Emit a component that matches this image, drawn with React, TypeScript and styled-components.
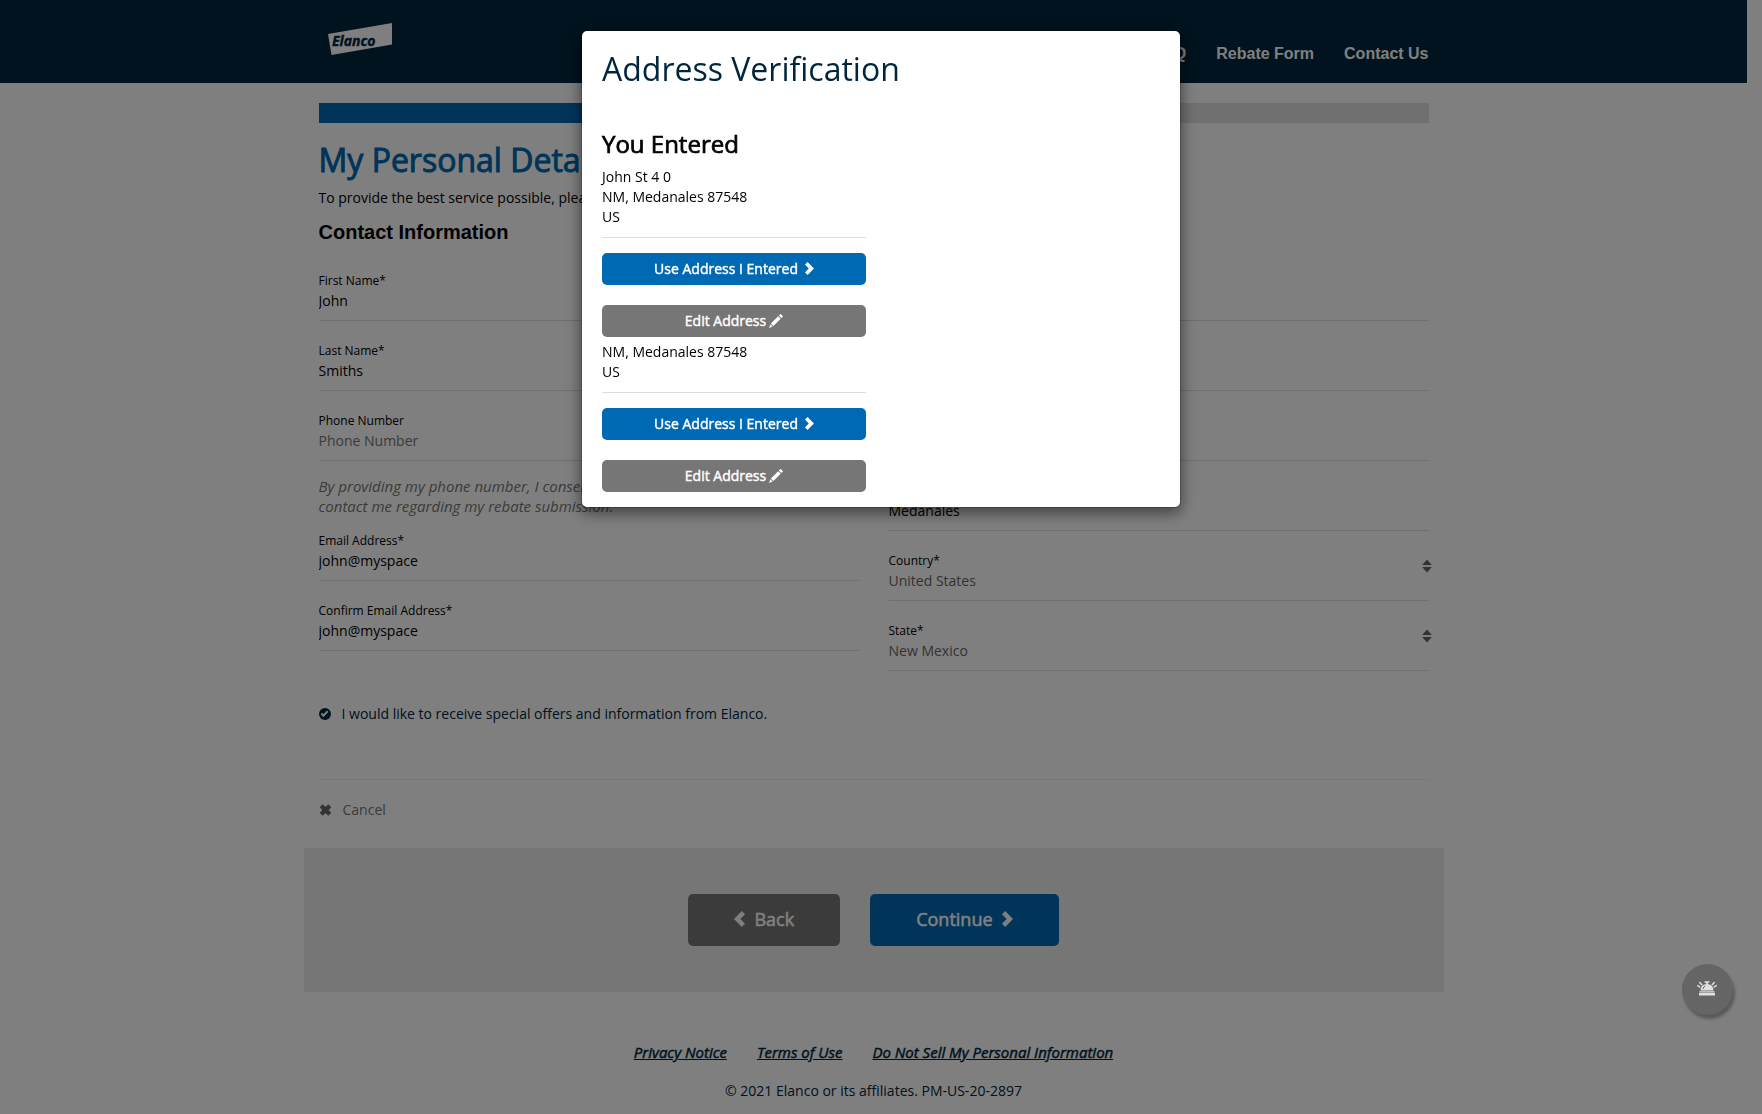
import React from 'react';
import styled, { createGlobalStyle, css } from 'styled-components';

const color = {
  navy: '#00263d',
  blue: '#0069b3',
  grey: '#767676',
  line: '#dedede',
};

const Global = createGlobalStyle`
  *, *::before, *::after { box-sizing: border-box; }
  body {
    margin: 0;
    background: #fff;
    color: #000;
    font: 14px/20px 'Open Sans', 'Noto Sans', sans-serif;
  }
  h1, h2, h3, p { margin: 0; }
  button, input, select { font: inherit; }
`;

/* Emboldened regular weight: same widths, thicker strokes. */
const thick = css`
  font-weight: 400;
  -webkit-text-stroke: 0.03em currentColor;
`;

const Page = styled.div`
  padding-right: 15px;
`;

const Container = styled.div`
  width: 100%;
  max-width: 1140px;
  margin: 0 auto;
  padding: 0 15px;
`;

const Header = styled.header`
  background: ${color.navy};
  color: #fff;
`;

const HeaderRow = styled(Container)`
  display: flex;
  justify-content: space-between;
  height: 83px;
`;

const Brand = styled.a`
  display: block;
  padding: 22px 9px 0;
`;

const Nav = styled.nav`
  display: flex;
  gap: 30px;
  padding-top: 44px;
`;

const NavLink = styled.a`
  color: #fff;
  font: bold 16px/20px 'Liberation Sans', Arial, sans-serif;
  text-decoration: none;
`;

const Progress = styled.div`
  height: 20px;
  margin: 20px 0 17px;
  background: #e1e1e1;
`;

const ProgressFill = styled.div`
  height: 100%;
  background: ${color.blue};
`;

const PageTitle = styled.h1`
  ${thick}
  margin-bottom: 8px;
  color: ${color.blue};
  font-size: 32px;
  line-height: 40px;
`;

const SectionTitle = styled.h3`
  margin: 12px 0;
  font: bold 20px/24px 'Liberation Sans', Arial, sans-serif;
`;

const Columns = styled.div`
  display: grid;
  grid-template-columns: 1fr 1fr;
  gap: 30px;
`;

const Column = styled.div`
  display: flex;
  flex-direction: column;
`;

const FieldBox = styled.div`
  position: relative;
  display: flex;
  flex-direction: column;
  padding-top: 15px;
  margin-bottom: 5px;
`;

const Label = styled.label`
  font-size: 12px;
  line-height: 20px;
`;

const control = css`
  appearance: none;
  width: 100%;
  height: 30px;
  padding: 0 0 10px;
  border: 0;
  border-bottom: 1px solid ${color.line};
  border-radius: 0;
  background: transparent;
  line-height: 20px;
  outline: 0;
`;

const Input = styled.input`
  ${control}
  color: #000;
  &::placeholder { color: ${color.grey}; opacity: 1; }
`;

const Select = styled.select`
  ${control}
  color: #666;
`;

const SortMark = styled.svg`
  position: absolute;
  right: -3px;
  bottom: 28px;
  pointer-events: none;
`;

const Consent = styled.p`
  margin-top: 10px;
  color: ${color.grey};
  font-size: 15px;
  font-style: italic;
`;

const OptIn = styled.label`
  display: flex;
  align-items: center;
  gap: 11px;
  margin: 28px 0 55px;
  color: ${color.navy};
`;

const Tick = styled.input`
  appearance: none;
  width: 12px;
  height: 12px;
  margin: 0;
  border-radius: 50%;
  background: ${color.navy};
  display: grid;
  place-items: center;
  &:checked::before {
    content: '';
    width: 7px;
    height: 4px;
    margin-bottom: 2px;
    border: solid #fff;
    border-width: 0 0 2px 2px;
    transform: rotate(-45deg);
  }
`;

const CancelRow = styled.div`
  padding: 20px 0 28px;
  border-top: 1px solid #eee;
`;

const Cancel = styled.button`
  display: flex;
  align-items: center;
  gap: 11px;
  height: 20px;
  padding: 0;
  border: 0;
  background: none;
  color: ${color.grey};
`;

const ActionBand = styled.div`
  display: flex;
  justify-content: center;
  gap: 30px;
  max-width: 1140px;
  margin: 0 auto;
  padding: 46px 15px;
  background: #ededed;
`;

const Button = styled.button<{ $tone: 'blue' | 'grey'; $large?: boolean }>`
  ${thick}
  display: flex;
  align-items: center;
  justify-content: center;
  gap: ${p => (p.$large ? 9 : p.$tone === 'blue' ? 7 : 3)}px;
  width: ${p => (p.$large ? 'auto' : '100%')};
  height: ${p => (p.$large ? 52 : 32)}px;
  padding: 0 ${p => (p.$large ? 46 : 12)}px ${p => (p.$large ? 2 : 1)}px;
  border: 0;
  border-radius: 5px;
  background: ${p => color[p.$tone]};
  color: #fff;
  font-size: ${p => (p.$large ? 18 : 14)}px;
  line-height: 20px;
`;

const Footer = styled.footer`
  padding-top: 50px;
  color: ${color.navy};
  text-align: center;
`;

const FooterLinks = styled.nav`
  display: flex;
  justify-content: center;
  gap: 30px;
  margin-bottom: 19px;
`;

const FooterLink = styled.a`
  ${thick}
  color: ${color.navy};
  font-size: 15px;
  font-style: italic;
  text-decoration: underline;
`;

const Backdrop = styled.div`
  position: fixed;
  inset: 0;
  padding: 30px 10px;
  background: rgba(0, 0, 0, 0.5);
`;

const Dialog = styled.section`
  width: 100%;
  max-width: 600px;
  margin: 0 auto;
  padding: 18px 20px 15px;
  border: 1px solid rgba(0, 0, 0, 0.2);
  border-radius: 6px;
  background: #fff;
  background-clip: padding-box;
  box-shadow: 0 5px 15px rgba(0, 0, 0, 0.5);
`;

const DialogTitle = styled.h1`
  margin-bottom: 42px;
  color: ${color.navy};
  font-size: 32px;
  font-weight: 400;
  line-height: 40px;
`;

const EnteredTitle = styled.h2`
  ${thick}
  margin-bottom: 10px;
  font-size: 24px;
  line-height: 26px;
`;

const AddressBlock = styled.div`
  & + & { margin-top: 5px; }
`;

const Rule = styled.hr`
  height: 1px;
  margin: 10px 0 15px;
  border: 0;
  background: ${color.line};
`;

const ButtonStack = styled.div`
  display: flex;
  flex-direction: column;
  gap: 20px;
`;

const Bell = styled.button`
  position: fixed;
  right: 29px;
  bottom: 99px;
  display: grid;
  place-items: center;
  width: 51px;
  height: 51px;
  padding: 0 1px 2px 0;
  border: 0;
  border-radius: 50%;
  background: #656565;
  box-shadow: 2px 4px 3px rgba(0, 0, 0, 0.3);
`;

function Chevron({ size, left }: { size: number; left?: boolean }) {
  return (
    <svg width={(size * 11) / 16} height={size} viewBox="0 0 11 16" aria-hidden="true">
      <path
        fill="currentColor"
        transform={left ? 'matrix(-1 0 0 1 11 0)' : undefined}
        d="M3.2 0 11 8 3.2 16 0 12.8 4.6 8 0 3.2Z"
      />
    </svg>
  );
}

function Pencil() {
  return (
    <svg width="14" height="14" viewBox="0 0 14 14" aria-hidden="true">
      <path
        fill="currentColor"
        d="M11.2.3q.4-.4.8 0l1.7 1.7q.4.4 0 .8l-1.3 1.3-2.5-2.5ZM9.2 2.3l2.5 2.5-7.3 7.3-2.5-2.5ZM1.4 10.3l2.3 2.3L0 14Z"
      />
    </svg>
  );
}

function Logo() {
  return (
    <svg width="66" height="34" viewBox="0 0 66 34" role="img" aria-label="Elanco">
      <path fill="#fff" d="M0 12 64 1v21.500L3.500 33Z" />
      <text
        x="4"
        y="24"
        fill={color.navy}
        stroke={color.navy}
        strokeWidth="0.4"
        fontFamily="'Open Sans', sans-serif"
        fontSize="14"
        fontStyle="italic"
        fontWeight="bold"
      >
        Elanco
      </text>
    </svg>
  );
}

type FieldProps = {
  id: string;
  label: string;
  value?: string;
  placeholder?: string;
  type?: string;
};

function TextField({ id, label, value, placeholder, type = 'text' }: FieldProps) {
  return (
    <FieldBox>
      <Label htmlFor={id}>{label}</Label>
      <Input id={id} type={type} defaultValue={value} placeholder={placeholder} />
    </FieldBox>
  );
}

function SelectField({ id, label, value }: FieldProps) {
  return (
    <FieldBox>
      <Label htmlFor={id}>{label}</Label>
      <Select id={id} defaultValue={value}>
        <option>{value}</option>
      </Select>
      <SortMark width="10" height="14" viewBox="0 0 10 14" aria-hidden="true">
        <path fill="#666" d="M5 .5 9.800 6H.2ZM5 13.500 9.800 8H.2Z" />
      </SortMark>
    </FieldBox>
  );
}

function Address({ lines }: { lines: string[] }) {
  return (
    <AddressBlock>
      {lines.map(line => (
        <p key={line}>{line}</p>
      ))}
      <Rule />
      <ButtonStack>
        <Button type="button" $tone="blue">
          Use Address I Entered <Chevron size={13} />
        </Button>
        <Button type="button" $tone="grey">
          Edit Address <Pencil />
        </Button>
      </ButtonStack>
    </AddressBlock>
  );
}

export default function App() {
  return (
    <>
      <Global />
      <Page>
        <Header>
          <HeaderRow>
            <Brand href="#home">
              <Logo />
            </Brand>
            <Nav>
              <NavLink href="#faq">FAQ</NavLink>
              <NavLink href="#rebate">Rebate Form</NavLink>
              <NavLink href="#contact">Contact Us</NavLink>
            </Nav>
          </HeaderRow>
        </Header>
        <main>
          <Container>
            <Progress>
              <ProgressFill style={{ width: '60%' }} />
            </Progress>
            <PageTitle>My Personal Details</PageTitle>
            <p>To provide the best service possible, please complete the fields below.</p>
            <SectionTitle>Contact Information</SectionTitle>
            <Columns>
              <Column>
                <TextField id="first" label="First Name*" value="John" />
                <TextField id="last" label="Last Name*" value="Smiths" />
                <TextField id="phone" label="Phone Number" placeholder="Phone Number" type="tel" />
                <Consent>
                  By providing my phone number, I consent to allow Elanco and its agents to
                  contact me regarding my rebate submission.
                </Consent>
                <TextField id="email" label="Email Address*" value="john@myspace" />
                <TextField id="confirm" label="Confirm Email Address*" value="john@myspace" />
              </Column>
              <Column>
                <TextField id="street" label="Address*" value="John St 4" />
                <TextField id="unit" label="Apt/Suite" value="0" />
                <TextField id="zip" label="Zip Code*" value="87548" />
                <TextField id="city" label="City*" value="Medanales" />
                <SelectField id="country" label="Country*" value="United States" />
                <SelectField id="state" label="State*" value="New Mexico" />
              </Column>
            </Columns>
            <OptIn>
              <Tick type="checkbox" defaultChecked />
              I would like to receive special offers and information from Elanco.
            </OptIn>
            <CancelRow>
              <Cancel type="button">
                <svg width="13" height="12" viewBox="0 0 13 12" aria-hidden="true">
                  <path
                    d="M2.200 1.700 10.800 10.300M10.800 1.700 2.200 10.300"
                    stroke="#666"
                    strokeWidth="4.400"
                  />
                </svg>
                Cancel
              </Cancel>
            </CancelRow>
          </Container>
          <ActionBand>
            <Button type="button" $tone="grey" $large>
              <Chevron size={16} left /> Back
            </Button>
            <Button type="button" $tone="blue" $large>
              Continue <Chevron size={16} />
            </Button>
          </ActionBand>
        </main>
        <Footer>
          <FooterLinks>
            <FooterLink href="#privacy">Privacy Notice</FooterLink>
            <FooterLink href="#terms">Terms of Use</FooterLink>
            <FooterLink href="#do-not-sell">Do Not Sell My Personal Information</FooterLink>
          </FooterLinks>
          <p>© 2021 Elanco or its affiliates. PM-US-20-2897</p>
        </Footer>
      </Page>
      <Backdrop>
        <Dialog role="dialog" aria-modal="true" aria-labelledby="dialog-title">
          <DialogTitle id="dialog-title">Address Verification</DialogTitle>
          <Columns>
            <div>
              <EnteredTitle>You Entered</EnteredTitle>
              <Address lines={['John St 4 0', 'NM, Medanales 87548', 'US']} />
              <Address lines={['NM, Medanales 87548', 'US']} />
            </div>
          </Columns>
        </Dialog>
      </Backdrop>
      <Bell type="button" aria-label="Service">
        <svg width="20" height="15" viewBox="0 0 20 15" fill="#e0e0e0" aria-hidden="true">
          <path d="M7.500.3h5v1.400h-1.600v1.200a6.200 6.200 0 0 1 5.500 6.500H3.600a6.200 6.200 0 0 1 5.500-6.500V1.700H7.500ZM2.500 10.200h15v1.200h-15ZM2 12h16v2.500H2Z" />
          <path
            d="M2.800 1.500 4.800 3.700M.8 4.600 2.800 6M17.200 1.500 15.200 3.700M19.200 4.600 17.200 6"
            stroke="#e0e0e0"
            strokeWidth="1.500"
            strokeLinecap="round"
          />
          <path d="M6 8q.3-2.200 2.200-3" fill="none" stroke="#656565" />
        </svg>
      </Bell>
    </>
  );
}
